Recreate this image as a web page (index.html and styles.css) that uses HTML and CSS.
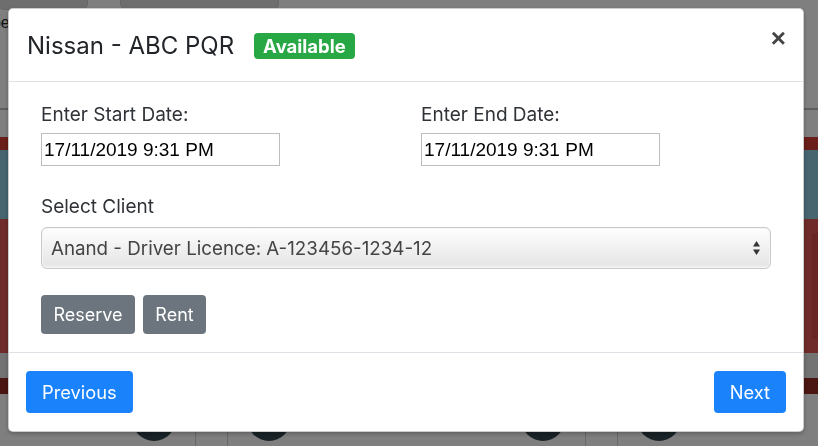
FILE: index.html
```html
<!DOCTYPE html>
<html>
<head>
<meta charset="utf-8">
<title>Nissan - ABC PQR</title>
<link rel="stylesheet" href="styles.css">
</head>
<body>
<div class="page">
  <div class="toolbar">
    <span class="tb-btn tb-a"></span>
    <span class="tb-btn tb-b"></span>
  </div>
  <div class="page-label">Type</div>
  <div class="rule"></div>
  <div class="band band-top"></div>
  <div class="band band-teal"></div>
  <div class="band band-red"><div class="band-inner"></div></div>
  <div class="band band-gap"></div>
  <div class="band band-dark"></div>
  <div class="band band-gap2"></div>
  <div class="cards">
    <div class="cell cell-1"><span class="avatar"></span></div>
    <div class="cell cell-2"></div>
    <div class="cell cell-3"><span class="avatar"></span><span class="avatar"></span></div>
    <div class="cell cell-4"></div>
    <div class="cell cell-5"><span class="avatar"></span></div>
  </div>
</div>
<div class="backdrop"></div>

<div class="modal">
  <div class="modal-header">
    <h5 class="modal-title">Nissan - ABC PQR</h5>
    <span class="badge">Available</span>
    <button class="close" type="button">&times;</button>
  </div>
  <div class="modal-body">
    <div class="row">
      <div class="field">
        <label class="label">Enter Start Date:</label>
        <input class="date-input" type="text" value="17/11/2019 9:31 PM">
      </div>
      <div class="field">
        <label class="label">Enter End Date:</label>
        <input class="date-input" type="text" value="17/11/2019 9:31 PM">
      </div>
    </div>
    <div class="field field-client">
      <label class="label">Select Client</label>
      <div class="select">
        <span class="select-text">Anand - Driver Licence: A-123456-1234-12</span>
        <svg class="select-arrows" width="9" height="20" viewBox="0 0 9 20">
          <path d="M4.5 3 L8 8.5 L1 8.5 Z" fill="#333"/>
          <path d="M4.5 17 L8 11.5 L1 11.5 Z" fill="#333"/>
        </svg>
      </div>
    </div>
    <div class="actions">
      <button class="btn btn-secondary btn-reserve" type="button">Reserve</button>
      <button class="btn btn-secondary btn-rent" type="button">Rent</button>
    </div>
  </div>
  <div class="modal-footer">
    <button class="btn btn-primary btn-lg" type="button">Previous</button>
    <button class="btn btn-primary btn-lg" type="button">Next</button>
  </div>
</div>
</body>
</html>
```

FILE: styles.css
```css
html, body {
  margin: 0;
  padding: 0;
}
body {
  width: 818px;
  height: 446px;
  overflow: hidden;
  background: #fff;
  font-family: "Liberation Sans", Arial, sans-serif;
}

/* ---------- page behind the modal ---------- */
.page {
  width: 818px;
  height: 446px;
  overflow: hidden;
}
.toolbar {
  display: flex;
  gap: 32px;
  height: 8px;
}
.tb-btn {
  display: block;
  height: 30px;
  margin-top: -22px;
  background: #dcdcdc;
  border: 1px solid #cfcfcf;
  border-radius: 6px;
}
.tb-a { width: 88px; margin-left: -2px; }
.tb-b { width: 157px; }
.page-label {
  height: 100px;
  margin-left: -25px;
  padding-top: 6px;
  box-sizing: border-box;
  font-size: 16px;
  color: #222;
}
.rule {
  height: 2px;
  background: #bdbdbd;
}
.band-top {
  margin-top: 27px;
  height: 13px;
  background: #d43a32;
}
.band-teal {
  height: 69px;
  background: #8ccbdf;
}
.band-red {
  height: 134px;
  background: #dc5652;
  display: flex;
  justify-content: flex-end;
  padding-top: 14px;
  box-sizing: border-box;
}
.band-inner {
  width: 6px;
  height: 106px;
  background: #cf4a46;
}
.band-gap {
  height: 25px;
  background: #e6e6e6;
}
.band-dark {
  height: 16px;
  background: #962a22;
}
.band-gap2 {
  height: 26px;
}
.cards {
  display: flex;
  height: 30px;
}
.cell {
  display: flex;
  box-sizing: border-box;
  border-right: 1px solid #d0d0d0;
}
.cell-1 { width: 196px; padding-left: 132px; }
.cell-2 { width: 32px; }
.cell-3 { width: 358px; padding: 0 20px 0 19px; justify-content: space-between; }
.cell-4 { width: 32px; }
.cell-5 { flex: 1; padding-left: 19px; border-right: 0; }
.avatar {
  display: block;
  width: 44px;
  height: 44px;
  border-radius: 50%;
  background: #33454f;
  margin-top: -23px;
}

.backdrop {
  position: fixed;
  inset: 0;
  background: rgba(0, 0, 0, 0.5);
}

/* ---------- modal ---------- */
.modal {
  position: fixed;
  left: 8px;
  top: 8px;
  width: 796px;
  box-sizing: border-box;
  background: #fff;
  border: 1px solid rgba(0, 0, 0, 0.2);
  border-radius: 5px;
  box-shadow: 0 2px 4px rgba(0, 0, 0, 0.25);
  color: #212529;
  font-family: "Inter", "Liberation Sans", sans-serif;
}
.modal-header {
  display: flex;
  align-items: center;
  height: 72px;
  padding: 0 17px 0 18px;
  border-bottom: 1px solid #dee2e6;
}
.modal-title {
  margin: 0;
  font-size: 24px;
  font-weight: 400;
  line-height: 30px;
  padding-top: 2px;
}
.badge {
  margin-left: 20px;
  margin-top: 2px;
  padding: 0 9px;
  height: 26px;
  line-height: 26px;
  background: #28a745;
  color: #fff;
  font-size: 18.5px;
  font-weight: 700;
  border-radius: 4px;
}
.close {
  margin-left: auto;
  margin-top: -14px;
  padding: 0;
  border: 0;
  background: transparent;
  color: #444;
  font-family: "Liberation Sans", Arial, sans-serif;
  font-size: 26px;
  font-weight: 700;
  line-height: 1;
}

.modal-body {
  padding: 21px 32px 18px;
}
.row {
  display: grid;
  grid-template-columns: 1fr 1fr;
  column-gap: 30px;
}
.field {
  display: flex;
  flex-direction: column;
  align-items: flex-start;
}
.label {
  font-size: 19px;
  line-height: 24px;
  margin-bottom: 6px;
  color: #2f3337;
}
.date-input {
  box-sizing: border-box;
  width: 239px;
  height: 33px;
  margin: 0;
  padding: 0 2px;
  border: 1px solid #bdbdbd;
  border-radius: 0;
  font-family: "Liberation Sans", Arial, sans-serif;
  font-size: 19px;
  color: #000;
  outline: none;
}
.field-client {
  margin-top: 29px;
}
.field-client .label {
  margin-bottom: 8px;
}
.select {
  box-sizing: border-box;
  width: 100%;
  height: 42px;
  display: flex;
  align-items: center;
  justify-content: space-between;
  padding: 0 9px;
  border: 1px solid #c9c9c9;
  border-radius: 6px;
  background: linear-gradient(#ffffff 0%, #f3f3f3 40%, #e6e6e6 92%, #f4f4f4 100%);
  box-shadow: inset 0 0 0 1px #f4f4f4;
}
.select-text {
  font-size: 18.75px;
  color: #444;
}
.select-arrows {
  display: block;
}
.actions {
  display: flex;
  gap: 8px;
  margin-top: 26px;
}
.btn {
  box-sizing: border-box;
  border: 0;
  border-radius: 4px;
  color: #fff;
  font-family: "Inter", "Liberation Sans", sans-serif;
  font-size: 18px;
  cursor: pointer;
}
.btn-secondary {
  background: #6c757d;
  height: 39px;
  padding: 0;
}
.btn-reserve { width: 94px; }
.btn-rent { width: 63px; }
.btn-primary {
  background: #1a83fb;
}
.btn-lg {
  height: 42px;
  padding: 0 16px;
  font-size: 18.3px;
}
.modal-footer {
  display: flex;
  justify-content: space-between;
  align-items: center;
  padding: 18px 17px;
  border-top: 1px solid #dee2e6;
}
```
